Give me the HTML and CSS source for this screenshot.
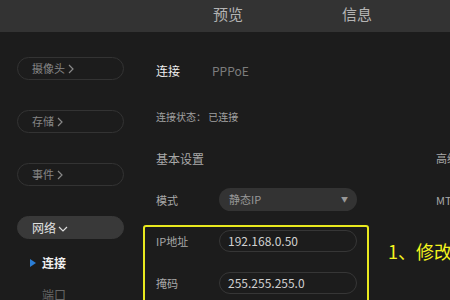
FILE: index.html
```html
<!DOCTYPE html>
<html lang="zh-CN">
<head>
<meta charset="UTF-8">
<title>网络设置</title>
<link rel="stylesheet" href="styles.css">
</head>
<body>

<div class="topbar">
    <span class="tab tab-preview">预览</span>
    <span class="tab tab-info">信息</span>
</div>

<div class="page">
    <div class="sidebar">
        <div class="pill">摄像头<svg class="chev" width="6" height="10" viewBox="0 0 6 10"><path d="M1 1 L5 5 L1 9" fill="none" stroke="#888" stroke-width="1.2"/></svg></div>
        <div class="pill">存储<svg class="chev" width="6" height="10" viewBox="0 0 6 10"><path d="M1 1 L5 5 L1 9" fill="none" stroke="#888" stroke-width="1.2"/></svg></div>
        <div class="pill">事件<svg class="chev" width="6" height="10" viewBox="0 0 6 10"><path d="M1 1 L5 5 L1 9" fill="none" stroke="#888" stroke-width="1.2"/></svg></div>
        <div class="pill pill-open">网络<svg class="down" width="10" height="6" viewBox="0 0 10 6"><path d="M1 1 L5 5 L9 1" fill="none" stroke="#ddd" stroke-width="1.2"/></svg></div>
        <div class="sub sub-active"><span class="arrow"></span>连接</div>
        <div class="sub">端口</div>
    </div>

    <div class="main">
        <div class="row row-conn">
            <span class="label label-strong">连接</span>
            <span class="value-muted">PPPoE</span>
        </div>

        <div class="row row-status">连接状态： 已连接</div>

        <div class="row row-section">
            <span class="left-col">基本设置</span>
            <span class="right-col">高级</span>
        </div>

        <div class="row row-mode">
            <div class="left-col field">
                <span class="label">模式</span>
                <div class="select">静态IP <span class="caret">&#9660;</span></div>
            </div>
            <span class="right-col">MTU</span>
        </div>

        <div class="row row-box">
            <div class="highlight">
                <div class="field">
                    <span class="label">IP地址</span>
                    <div class="input">192.168.0.50</div>
                </div>
                <div class="field">
                    <span class="label">掩码</span>
                    <div class="input">255.255.255.0</div>
                </div>
            </div>
            <div class="note">1、修改</div>
        </div>
    </div>
</div>

</body>
</html>
```

FILE: styles.css
```css
html {
    overflow: hidden;
}
body {
    margin: 0;
    width: 450px;
    height: 300px;
    overflow: hidden;
    background-color: #1c1c1c;
    font-family: "Noto Sans CJK SC", "Noto Sans", sans-serif;
    color: #aaa;
}
.topbar {
    height: 32px;
    background-color: #333;
    position: relative;
}
.tab {
    position: absolute;
    top: 3px;
    font-size: 15px;
    color: #b4b4b4;
}
.tab-preview { left: 213px; }
.tab-info { left: 342px; }

.page {
    display: flex;
}
.sidebar {
    width: 126px;
    padding: 25px 0 0 17px;
    flex-shrink: 0;
}
.pill {
    box-sizing: border-box;
    width: 107px;
    height: 23px;
    border: 1px solid #333;
    border-radius: 12px;
    padding-left: 14px;
    font-size: 11px;
    line-height: 21px;
    color: #858585;
    margin-bottom: 30px;
}
.chev {
    margin-left: 3px;
    vertical-align: -1px;
}
.pill-open {
    background-color: #393939;
    border-color: #393939;
    color: #e0e0e0;
    margin-top: 2px;
    margin-bottom: 16px;
    font-size: 12px;
}
.down {
    margin-left: 2px;
    vertical-align: 1px;
}
.sub {
    height: 16px;
    line-height: 16px;
    font-size: 12px;
    color: #666;
    padding-left: 25px;
    margin-bottom: 16px;
    position: relative;
}
.sub-active {
    color: #f0f0f0;
    font-weight: bold;
}
.arrow {
    position: absolute;
    left: 13px;
    top: 4px;
    width: 0;
    height: 0;
    border-top: 4px solid transparent;
    border-bottom: 4px solid transparent;
    border-left: 6px solid #2b7ed6;
}

.main {
    flex: 1;
    display: flex;
    flex-direction: column;
}
.row {
    display: flex;
    align-items: center;
}
.row-conn {
    height: 20px;
    margin-top: 28px;
    padding-left: 13px;
}
.label {
    width: 63px;
    flex-shrink: 0;
    font-size: 11px;
    color: #a8a8a8;
}
.label-strong {
    width: 56px;
    font-size: 12px;
    color: #eee;
}
.value-muted {
    font-size: 12px;
    color: #7c7c7c;
}
.row-status {
    height: 20px;
    margin-top: 26px;
    padding-left: 13px;
    font-size: 10px;
    color: #a0a0a0;
}
.row-section {
    height: 20px;
    margin-top: 22px;
    font-size: 12px;
    color: #a8a8a8;
}
.left-col {
    width: 280px;
    padding-left: 13px;
    flex-shrink: 0;
}
.right-col {
    font-size: 11px;
    color: #a8a8a8;
}
.row-mode {
    height: 23px;
    margin-top: 20px;
}
.field {
    display: flex;
    align-items: center;
}
.select {
    box-sizing: border-box;
    width: 138px;
    height: 23px;
    border-radius: 12px;
    background-color: #333;
    padding: 0 9px 0 10px;
    font-size: 11px;
    line-height: 23px;
    color: #999;
    display: flex;
    justify-content: space-between;
}
.caret {
    font-size: 7px;
    color: #999;
}
.row-box {
    margin-top: 14px;
    align-items: flex-start;
}
.highlight {
    box-sizing: border-box;
    width: 226px;
    height: 90px;
    border: 2px solid #e8e81e;
    border-radius: 3px;
    padding: 3px 0 0 11px;
    display: flex;
    flex-direction: column;
    gap: 20px;
    flex-shrink: 0;
}
.input {
    box-sizing: border-box;
    width: 138px;
    height: 22px;
    border: 1px solid #363636;
    border-radius: 11px;
    padding-left: 8px;
    font-size: 12px;
    line-height: 20px;
    color: #d0d0d0;
}
.note {
    margin: 13px 0 0 19px;
    font-size: 18px;
    color: #f4f41e;
    white-space: nowrap;
}
```
